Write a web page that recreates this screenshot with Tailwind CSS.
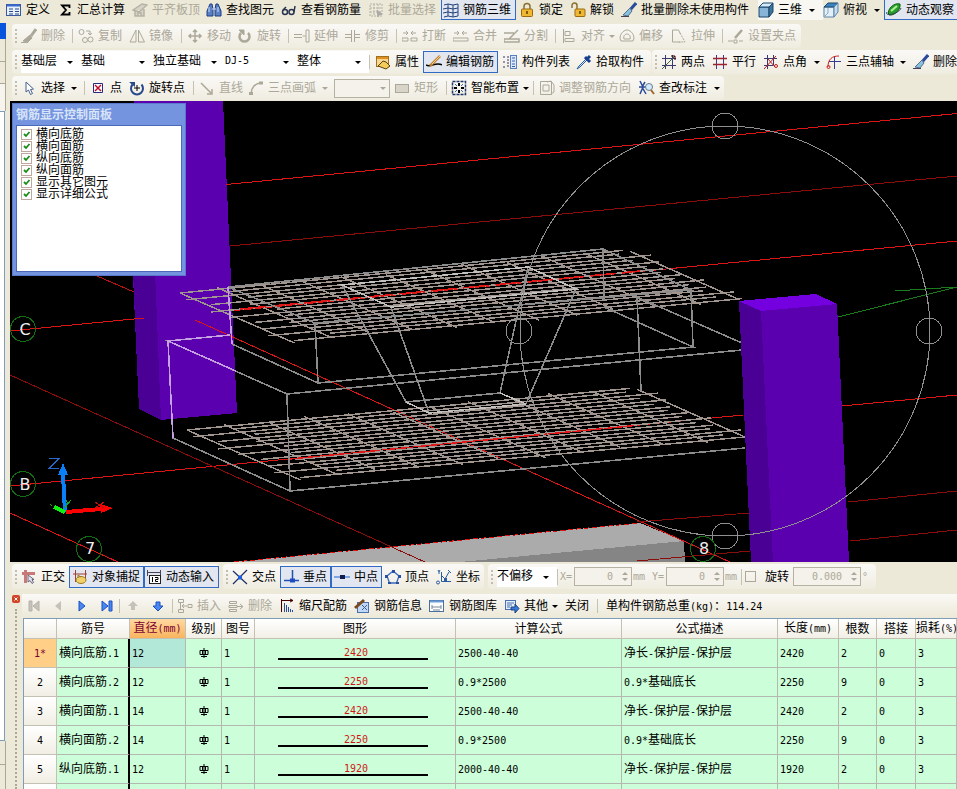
<!DOCTYPE html>
<html lang="zh-CN">
<head>
    <meta charset="UTF-8">
    <meta name="viewport" content="width=device-width, initial-scale=1.0">
    <title>钢筋三维</title>
    <script src="https://cdn.jsdelivr.net/npm/@tailwindcss/browser@4"></script>
</head>
<body class="flex h-screen flex-col overflow-hidden bg-[#ece9d8] fill-none stroke-current font-['Liberation_Sans','Noto_Sans_CJK_SC',sans-serif] text-xs leading-4 text-black whitespace-nowrap">

    <!-- icon set -->
    <svg class="hidden">
        <symbol id="i-define" viewBox="0 0 16 16"><rect x="0.5" y="2.5" width="14" height="11" fill="#e8f0fc" stroke="#3a5a9c"/><path d="M1 3.500h13" stroke="#3a6ad0" stroke-width="2"/><path d="M3 7h4M3 9.500h4M3 12h4M9 7h4M9 9.500h4M9 12h4" stroke="#2a4a8c"/></symbol>
        <symbol id="i-sum" viewBox="0 0 16 16"><path d="M12.500 6V3.500H5L9 8l-4 4.500h7.500V10" stroke="#000" stroke-width="1.800"/></symbol>
        <symbol id="i-slab" viewBox="0 0 16 16"><path d="M1 8l9-6 5 1-8 7zM3 9v5h9v-7M6 14v-3h3v3" stroke="#b5b2a4" fill="#d6d3c6" stroke-width="1.500"/></symbol>
        <symbol id="i-find" viewBox="0 0 16 16"><path d="M4 2h2l1 5v7H1V9zM10 2h2l3 7v5H9V7z" fill="#5a80c8" stroke="#1c3c80"/><path d="M6 7h4M3 5v5M12 5v5" stroke="#cfe0ff"/></symbol>
        <symbol id="i-glass" viewBox="0 0 16 16"><circle cx="4" cy="10" r="2.500" stroke="#2a3450" stroke-width="1.500"/><circle cx="10.500" cy="10" r="2.500" stroke="#2a3450" stroke-width="1.500"/><path d="M2 8l3-3M13 10l1-6" stroke="#2a3450" stroke-width="1.500"/></symbol>
        <symbol id="i-batch" viewBox="0 0 16 16"><path d="M2 2h12v12H2zM2 6h12M2 10h12M6 2v12M10 2v5" stroke="#b5b2a4" stroke-dasharray="2 1"/><path d="M9 8l5 4-3 1-1 2z" fill="#aaa" stroke="#aaa"/></symbol>
        <symbol id="i-grid3" viewBox="0 0 16 16"><path d="M1 3l4-1v12l-4 1M5 2l5 1v12l-5-1M10 3l5-1v12l-5 1M0 7l5-1 5 1 5-1M0 11l5-1 5 1 5-1" stroke="#22407c"/></symbol>
        <symbol id="i-lock" viewBox="0 0 16 16"><path d="M5 7V4.500a3 3 0 016 0V7" stroke="#8a7030" stroke-width="1.500"/><rect x="2.500" y="7" width="11" height="7.500" rx="1" fill="#f0b830" stroke="#9a6a10"/><path d="M8 9v3" stroke="#5a3a00" stroke-width="1.500"/></symbol>
        <symbol id="i-unlock" viewBox="0 0 16 16"><path d="M2 6V3.500a2.500 2.500 0 015 0V7" stroke="#8a7030" stroke-width="1.500"/><rect x="5" y="7" width="10" height="7.500" rx="1" fill="#f0b830" stroke="#9a6a10"/><path d="M10 9v3" stroke="#5a3a00" stroke-width="1.500"/></symbol>
        <symbol id="i-brush" viewBox="0 0 16 16"><path d="M15 1L9 8" stroke="#2a4a9c" stroke-width="3"/><path d="M9 6l2 3-4 5-5-1z" fill="#8ac0e0" stroke="#56708c"/><path d="M0 14.500h8" stroke="#445"/></symbol>
        <symbol id="i-cube" viewBox="0 0 16 16"><path d="M1 5v10h10V5z" fill="#88b4d8" stroke="#1c4468"/><path d="M1 5l4-4h10l-4 4z" fill="#d4ecfa" stroke="#1c4468"/><path d="M11 5l4-4v9l-4 5z" fill="#3c749c" stroke="#1c4468"/></symbol>
        <symbol id="i-topv" viewBox="0 0 16 16"><path d="M1 5v10h10V5z" fill="#e4f0f8" stroke="#5c84a8"/><path d="M1 5l4-4h10l-4 4z" fill="#3c84c0" stroke="#1c4468"/><path d="M11 5l4-4v9l-4 5z" fill="#c4dcec" stroke="#5c84a8"/><path d="M1 15l4-4V6" stroke="#8ab"/></symbol>
        <symbol id="i-orbit" viewBox="0 0 16 16"><path d="M3 13C0 8 8 0 14 2c1 5-5 12-11 11z" fill="#28a028" stroke="#106010"/><path d="M5 9l6-5" stroke="#b0f0a0" stroke-width="2"/><path d="M1 10c-3 5 12 2 14-4" stroke="#345"/></symbol>

        <symbol id="g-brush" viewBox="0 0 16 16"><path d="M15 1l-5 7" stroke-width="3"/><path d="M9 7l2 3-4 4-5-1zM0 14.500h7" fill="currentColor"/></symbol>
        <symbol id="g-copy" viewBox="0 0 16 16"><circle cx="3.500" cy="4" r="2.500"/><circle cx="7" cy="12" r="2.500"/><circle cx="12.500" cy="11.500" r="2.500"/><path d="M8 3h4v4M10 5l2 2 2-2"/></symbol>
        <symbol id="g-mirror" viewBox="0 0 16 16"><path d="M7 2v12H1zM9.500 2v12h6z"/></symbol>
        <symbol id="g-move" viewBox="0 0 16 16"><path d="M8 2v12M2 8h12M6 4l2-2 2 2M6 12l2 2 2-2M4 6L2 8l2 2M12 6l2 2-2 2" stroke-width="1.500"/></symbol>
        <symbol id="g-rot" viewBox="0 0 16 16"><path d="M4 5a5 5 0 107 0" stroke-width="2.500"/><path d="M2 2h5v5z" fill="currentColor"/></symbol>
        <symbol id="g-ext" viewBox="0 0 16 16"><path d="M0 6.500h8M0 9.500h8M8.500 8h3M12 2h3v12h-3z"/></symbol>
        <symbol id="g-trim" viewBox="0 0 16 16"><path d="M0 6.500h6M0 9.500h6M10 6.500h5M10 9.500h5M6.500 2v12M9.500 2v12"/></symbol>
        <symbol id="g-break" viewBox="0 0 16 16"><path d="M0 10h6v3H0zM9 10h6v3H9zM1 5h5M9 5h5M4 3l2 2-2 2M11 3L9 5l2 2"/></symbol>
        <symbol id="g-join" viewBox="0 0 16 16"><path d="M0 10h15v3H0zM1 5h5M9 5h5M4 3l2 2-2 2M11 3L9 5l2 2"/></symbol>
        <symbol id="g-split" viewBox="0 0 16 16"><path d="M0 5h10M0 11h15v3H0zM14 2l-9 9" stroke-width="1.500"/></symbol>
        <symbol id="g-align" viewBox="0 0 16 16"><path d="M2.500 1v14M4 3.500h5v4H4zM4 10.500h9v3H4z"/></symbol>
        <symbol id="g-off" viewBox="0 0 16 16"><path d="M2 13c-3-5 2-11 6-11s9 6 6 11z"/><path d="M5 11c-1-3 1-5 3-5s4 2 3 5z"/></symbol>
        <symbol id="g-str" viewBox="0 0 16 16"><path d="M1.500 2v12h8M1.500 2h6l2 4"/><path d="M9 5l5 9H8" stroke-dasharray="2 1"/></symbol>
        <symbol id="g-grip" viewBox="0 0 16 16"><path d="M14 2l-7 8" stroke-width="2.500"/><path d="M0 13h5M6 12h3v3H6zM11 13h4"/></symbol>

        <symbol id="i-prop" viewBox="0 0 16 16"><rect x="1.500" y="2.500" width="12" height="10" fill="#f8d890" stroke="#a07020"/><path d="M2 4h11" stroke="#e09020" stroke-width="2"/><path d="M3 12l5-5 3 1 4 4-4 3z" fill="#f4cc58" stroke="#5a4010"/></symbol>
        <symbol id="i-edit" viewBox="0 0 16 16"><path d="M0 11c5 3 10-4 16 0" stroke="#000" stroke-width="1.500"/><path d="M14 2L6 10l-2 2" stroke="#c08030" stroke-width="2.500"/><path d="M14 2L6 10" stroke="#f4d080"/></symbol>
        <symbol id="i-list" viewBox="0 0 16 16"><path d="M1 3h3M1 8h3M1 13h3M6 2v12" stroke="#336" stroke-dasharray="2 1"/><rect x="8.500" y="1.500" width="6" height="13" fill="#dce8fa" stroke="#5a80c0"/><path d="M10 4h3M10 7h3M10 10h3M10 12.500h3" stroke="#36a"/></symbol>
        <symbol id="i-pick" viewBox="0 0 16 16"><path d="M10 5l-7 7-2 3 3-2 7-7" fill="#d4e8ff" stroke="#2a5a9c"/><path d="M9 3l5 5M11 5l3-3" stroke="#1a3f90" stroke-width="3"/></symbol>
        <symbol id="i-two" viewBox="0 0 16 16"><path d="M4.500 1v14M11.500 1v14M1 4.500h14M1 11.500h14" stroke="#3a3a70"/><path d="M1 15L14 2" stroke="#3a6a3a"/><path d="M10 2h4v4" stroke="#400"/></symbol>
        <symbol id="i-par" viewBox="0 0 16 16"><path d="M4.500 1v14M11.500 1v14" stroke="#3a3a90"/><path d="M1 4.500h14M1 10.500h14" stroke="#a02030" stroke-width="1.500"/></symbol>
        <symbol id="i-ang" viewBox="0 0 16 16"><path d="M4.500 1v14M10.500 1v10M1 4.500h13M1 11.500h9" stroke="#3a3a70"/><path d="M1 15L13 2M5 5l7 8" stroke="#c02020"/><circle cx="13" cy="12" r="1.500" stroke="#c02020"/></symbol>
        <symbol id="i-arc3" viewBox="0 0 16 16"><path d="M8.500 2v13M3 7.500h12" stroke="#3a3a90"/><path d="M2 13C2 5 6 2 13 2" stroke="#d02020"/><circle cx="2.500" cy="13" r="1.500" stroke="#d02020"/></symbol>

        <symbol id="i-arrow" viewBox="0 0 16 16"><path d="M5 2v10l2.500-2 2 4.500 2-1-2-4 3-.500z" fill="#fff" stroke="#44608c"/></symbol>
        <symbol id="i-pt" viewBox="0 0 16 16"><path d="M3.500 3.500h9v9h-9z" fill="#fff" stroke="#2a2a80"/><path d="M5 5l6 6M11 5l-6 6" stroke="#c01030" stroke-width="1.500"/></symbol>
        <symbol id="i-rotp" viewBox="0 0 16 16"><path d="M3.500 4.500a6 6 0 109 0" stroke="#26488c" stroke-width="2"/><path d="M0 2h6v5z" fill="#26488c" stroke="none"/><path d="M8 5v6M5 8h6" stroke="#000"/></symbol>
        <symbol id="g-line" viewBox="0 0 16 16"><path d="M2 3l10 10M13 9v5H8" stroke-width="1.500"/></symbol>
        <symbol id="g-arc" viewBox="0 0 16 16"><path d="M3 14C3 8 7 3 13 3" stroke-width="1.500"/><path d="M1 12h4v3H1zM11 1.500h4v3h-4z" fill="currentColor" stroke="none"/></symbol>
        <symbol id="g-rect" viewBox="0 0 16 16"><rect x="1.500" y="4.500" width="13" height="8" fill="#d8d5c8"/></symbol>
        <symbol id="i-smart" viewBox="0 0 16 16"><rect x="1.500" y="1.500" width="13" height="13" stroke="#22386c" stroke-dasharray="3 1" stroke-width="1.500"/><path d="M8 3v3M8 10v3M3 8h3M10 8h3" stroke="#000" stroke-width="2"/><path d="M4 4l2 2M12 4l-2 2M4 12l2-2M12 12l-2-2" stroke="#36a"/></symbol>
        <symbol id="g-dir" viewBox="0 0 16 16"><path d="M1.500 1.500h11v13h-11zM4 5h6v6H4zM8 2l4-1 3 4v7l-3 2"/></symbol>
        <symbol id="i-check" viewBox="0 0 16 16"><path d="M1 1l3 6-3 7M6 2L3 7l4 7M0 7h8" stroke="#2a4a9c" stroke-width="1.500"/><circle cx="10" cy="7" r="3.500" fill="#d4ecff" stroke="#6a7a8c"/><path d="M12 10l3 4" stroke="#a06a30" stroke-width="2"/></symbol>

        <symbol id="i-ortho" viewBox="0 0 16 16"><path d="M4.500 1v13M1 4.500h13" stroke="#c87878" stroke-width="3"/><path d="M7 6v7l2-1.500 2 3 1.500-1-1.500-3h2z" fill="#e4e4f4" stroke="#667"/></symbol>
        <symbol id="i-snap" viewBox="0 0 16 16"><path d="M1 5h14M3.500 1v12M13.500 1v9" stroke="#a04030"/><ellipse cx="9" cy="11" rx="5" ry="3.500" fill="#f0d068" stroke="#a07a20"/><path d="M6 9V6l3 2" stroke="#a07a20"/></symbol>
        <symbol id="i-dyn" viewBox="0 0 16 16"><path d="M1.500 1v6M14.500 1v6M2 3.500h12" stroke="#445"/><rect x="3.500" y="6.500" width="11" height="8" fill="#fff" stroke="#222"/><path d="M6.500 8v5M9 8.500h3v2H9.500v2H12" stroke="#000"/></symbol>
        <symbol id="i-cross" viewBox="0 0 16 16"><path d="M1 2l14 13M15 1L1 15" stroke="#1c3060" stroke-width="1.200"/><rect x="6" y="6.500" width="4" height="4" fill="#2060e0" stroke="none"/></symbol>
        <symbol id="i-perp" viewBox="0 0 16 16"><path d="M9.500 1v10M1 11.500h15" stroke="#2050b0" stroke-width="1.500"/><path d="M7 9.500h5v4H7z" fill="#1c4cc0" stroke="none"/></symbol>
        <symbol id="i-mid" viewBox="0 0 16 16"><path d="M0 8h16" stroke="#5a90e0" stroke-width="1.500"/><rect x="6" y="6" width="5" height="4" fill="#101c50" stroke="none"/></symbol>
        <symbol id="i-penta" viewBox="0 0 16 16"><path d="M8 2l6 5-2.500 7h-7L2 7z" stroke="#3a6ac0" stroke-width="1.300"/><path d="M7 1h3v3H7zM0 6h3v3H0zM13 6h3v3h-3zM3 13h3v2H3zM11 13h3v2h-3z" fill="#28509c" stroke="none"/></symbol>
        <symbol id="i-coord" viewBox="0 0 16 16"><path d="M5.500 3v9.500H15M5 6l4 4 4-7M2 1l1 2 1-2M3 3v2M12 1l3 3" stroke="#2a5aa0"/><circle cx="2" cy="13.500" r="1.500" stroke="#2a5aa0"/><path d="M8 9h3v3H8z" fill="#2a5aa0" stroke="none"/></symbol>

        <symbol id="g-ins" viewBox="0 0 16 16"><path d="M1.500 1.500h5v3h-5zM1.500 11.500h5v3h-5zM11 6.500h4v3h-4zM3.500 5v6M10 8H5M7 6L5 8l2 2"/></symbol>
        <symbol id="g-del" viewBox="0 0 16 16"><path d="M1.500 3.500h7v2h-7zM1.500 11.500h7v2h-7zM1 7.500h8v2H1zM9 8.500h6M12 6l3 2.500-3 2.500"/></symbol>
        <symbol id="i-scale" viewBox="0 0 16 16"><path d="M2.500 1v13M2 2.500h12M11 1l3 1.500L11 4" stroke="#400"/><path d="M5.500 5v9M7.500 7v7M9.500 9v5M11.500 11v3M13.500 12v2" stroke="#2a4a9c"/></symbol>
        <symbol id="i-info" viewBox="0 0 16 16"><rect x="3.500" y="4.500" width="11" height="10" fill="#c0d8f4" stroke="#4a70b0"/><path d="M1 10L10 2" stroke="#7a4a20" stroke-width="3"/><path d="M8 7l5 5M13 7l-5 5" stroke="#3a60a0"/></symbol>
        <symbol id="i-lib" viewBox="0 0 16 16"><rect x="0.500" y="2.500" width="14" height="11" fill="#fff" stroke="#4a70a0"/><path d="M1 3.500h13" stroke="#6a9ad8" stroke-width="2"/><path d="M3 9h9M3 7v4M12 7v4M4 12h7" stroke="#789"/></symbol>
        <symbol id="i-other" viewBox="0 0 16 16"><rect x="1.500" y="2.500" width="10" height="9" fill="#e4eefc" stroke="#4a70b0"/><path d="M3 5h7M3 7h5M3 9h3" stroke="#4a70b0"/><path d="M7 9h4V6l4 4.500L11 15v-3H7z" fill="#3a78d8" stroke="#1c4080"/></symbol>
        <symbol id="n-play" viewBox="0 0 16 16"><path d="M5 3l6 5-6 5z"/></symbol>
        <symbol id="n-end" viewBox="0 0 16 16"><path d="M3 3l6 5-6 5zM10 3h3v10h-3z"/></symbol>
        <symbol id="n-down" viewBox="0 0 16 16"><path d="M6 4h4v4h3l-5 5-5-5h3z"/></symbol>
        <symbol id="s-phi" viewBox="0 0 10 10"><path d="M1 2.500h8v4H1zM3.500 2.500v4M6.500 2.500v4M5 0v10M2 8.500h6" stroke="#000"/></symbol>
    </svg>

    <!-- top toolbar -->
    <nav class="flex h-[23px] shrink-0 items-start overflow-hidden pl-[6px] *:shrink-0 [&>button]:flex [&>button]:h-[20px] [&>button]:items-center [&>button]:gap-1 [&_svg]:size-4 [&_svg]:shrink-0">
        <button class="w-[51px]"><svg><use href="#i-define"/></svg>定义</button>
        <button class="w-[75px]"><svg><use href="#i-sum"/></svg>汇总计算</button>
        <button class="w-[74px] text-[#aca899]" disabled><svg><use href="#i-slab"/></svg>平齐板顶</button>
        <button class="w-[75px]"><svg><use href="#i-find"/></svg>查找图元</button>
        <button class="w-[87px]"><svg><use href="#i-glass"/></svg>查看钢筋量</button>
        <button class="w-[73px] text-[#aca899]" disabled><svg><use href="#i-batch"/></svg>批量选择</button>
        <button class="mr-[3px] w-[75px] border border-t-0 border-[#316ac5] bg-[#e1e6f0] pl-px"><svg><use href="#i-grid3"/></svg>钢筋三维</button>
        <button class="w-[51px]"><svg><use href="#i-lock"/></svg>锁定</button>
        <button class="w-[51px]"><svg><use href="#i-unlock"/></svg>解锁</button>
        <button class="w-[137px]"><svg><use href="#i-brush"/></svg>批量删除未使用构件</button>
        <button class="w-[65px] bg-[#f8f7f2]"><svg><use href="#i-cube"/></svg>三维<b class="ml-[3px] border-x-[3px] border-t-[3px] border-x-transparent"></b></button>
        <button class="w-[61px]"><svg><use href="#i-topv"/></svg>俯视<b class="ml-[3px] border-x-[3px] border-t-[3px] border-x-transparent"></b></button>
        <button class="w-[84px] border border-t-0 border-[#316ac5] bg-[#e1e6f0] pl-px"><svg><use href="#i-orbit"/></svg>动态观察</button>
    </nav>

    <div class="flex min-h-0 flex-1">
        <!-- edge of the docked panel -->
        <aside class="flex w-[10px] shrink-0 flex-col pr-[4px]">
            <div class="h-[16px] bg-[#0855dd]"></div>
            <div class="h-[23px] border-r border-b border-[#aca899]"></div>
            <div class="h-[22px] border-r border-b border-[#aca899]"></div>
            <div class="h-[27px] border-r border-[#aca899] bg-[#f6f4ec]"></div>
            <div class="mr-px h-[630px] border-r border-y border-[#7f9db9] bg-white"></div>
            <div class="h-[24px] border-r border-b border-[#aca899]"></div>
            <div class="flex-1 border-r border-[#aca899]"></div>
        </aside>

        <main class="flex min-w-0 flex-1 flex-col">
            <!-- editing tools -->
            <div class="flex shrink-0 flex-col gap-[2px] overflow-hidden py-px">
                <div class="ml-[2px] flex h-[24px] w-fit items-center rounded-sm bg-linear-to-b from-[#faf9f6] to-[#efece0] text-[#aca899] *:shrink-0 [&>button]:flex [&>button]:h-[22px] [&>button]:items-center [&>button]:gap-1 [&_svg]:size-4 [&_svg]:shrink-0">
                    <div class="mr-[2px] ml-[3px] h-[14px] w-[4px] border-l-2 border-dotted border-[#c1beae]"></div>
                    <button disabled class="w-[51px]"><svg><use href="#g-brush"/></svg>删除</button>
                    <div class="h-[14px] w-[6px] border-l border-[#c5c2b2]"></div>
                    <button disabled class="w-[51px]"><svg><use href="#g-copy"/></svg>复制</button>
                    <button disabled class="w-[52px]"><svg><use href="#g-mirror"/></svg>镜像</button>
                    <div class="h-[14px] w-[6px] border-l border-[#c5c2b2]"></div>
                    <button disabled class="w-[50px]"><svg><use href="#g-move"/></svg>移动</button>
                    <button disabled class="w-[51px]"><svg><use href="#g-rot"/></svg>旋转</button>
                    <div class="h-[14px] w-[6px] border-l border-[#c5c2b2]"></div>
                    <button disabled class="w-[51px]"><svg><use href="#g-ext"/></svg>延伸</button>
                    <button disabled class="w-[51px]"><svg><use href="#g-trim"/></svg>修剪</button>
                    <div class="h-[14px] w-[6px] border-l border-[#c5c2b2]"></div>
                    <button disabled class="w-[51px]"><svg><use href="#g-break"/></svg>打断</button>
                    <button disabled class="w-[51px]"><svg><use href="#g-join"/></svg>合并</button>
                    <button disabled class="w-[51px]"><svg><use href="#g-split"/></svg>分割</button>
                    <div class="h-[14px] w-[6px] border-l border-[#c5c2b2]"></div>
                    <button disabled class="w-[58px]"><svg><use href="#g-align"/></svg>对齐<b class="border-x-[3px] border-t-[3px] border-x-transparent"></b></button>
                    <button disabled class="w-[52px]"><svg><use href="#g-off"/></svg>偏移</button>
                    <button disabled class="w-[51px]"><svg><use href="#g-str"/></svg>拉伸</button>
                    <div class="h-[14px] w-[6px] border-l border-[#c5c2b2]"></div>
                    <button disabled class="w-[73px]"><svg><use href="#g-grip"/></svg>设置夹点</button>
                </div>

                <div class="flex h-[24px] *:shrink-0">
                    <div class="ml-[2px] flex w-[639px] items-center rounded-sm bg-linear-to-b from-[#faf9f6] to-[#efece0] *:shrink-0 [&>button]:flex [&>button]:h-[22px] [&>button]:items-center [&>button]:gap-1 [&>button>svg]:size-4 [&>button>svg]:shrink-0 [&>label]:relative [&>label]:h-[22px] [&>label]:bg-white [&_select]:h-[20px] [&_select]:w-full [&_select]:appearance-none [&_b]:absolute [&_b]:top-[10px] [&_b]:right-[8px] [&_b]:border-x-[3px] [&_b]:border-t-[3px] [&_b]:border-x-transparent">
                        <div class="mr-[2px] ml-[3px] h-[14px] w-[4px] border-l-2 border-dotted border-[#c1beae]"></div>
                        <label class="w-[60px]"><select aria-label="楼层"><option>基础层</option></select><b></b></label>
                        <label class="w-[72px]"><select aria-label="构件类型"><option>基础</option></select><b></b></label>
                        <label class="w-[72px]"><select aria-label="构件"><option>独立基础</option></select><b></b></label>
                        <label class="w-[72px]"><select aria-label="名称" class="font-['DejaVu_Sans_Mono',monospace] text-[10px]"><option>DJ-5</option></select><b></b></label>
                        <label class="w-[72px]"><select aria-label="范围"><option>整体</option></select><b></b></label>
                        <div class="h-[14px] w-[6px] border-l border-[#c5c2b2]"></div>
                        <button class="w-[48px]"><svg><use href="#i-prop"/></svg>属性</button>
                        <button class="mr-[4px] w-[75px] border border-[#316ac5] bg-[#e1e6f0] pl-[2px]"><svg><use href="#i-edit"/></svg>编辑钢筋</button>
                        <button class="w-[74px]"><svg><use href="#i-list"/></svg>构件列表</button>
                        <button class="w-[72px]"><svg><use href="#i-pick"/></svg>拾取构件</button>
                    </div>
                    <div class="ml-px flex items-center rounded-sm bg-linear-to-b from-[#faf9f6] to-[#efece0] *:shrink-0 [&>button]:flex [&>button]:h-[22px] [&>button]:items-center [&>button]:gap-1 [&_svg]:size-4 [&_svg]:shrink-0">
                        <div class="mr-[2px] ml-[3px] h-[14px] w-[4px] border-l-2 border-dotted border-[#c1beae]"></div>
                        <button class="w-[51px]"><svg><use href="#i-two"/></svg>两点</button>
                        <button class="w-[51px]"><svg><use href="#i-par"/></svg>平行</button>
                        <button class="w-[63px]"><svg><use href="#i-ang"/></svg>点角<b class="ml-[3px] border-x-[3px] border-t-[3px] border-x-transparent"></b></button>
                        <button class="w-[87px]"><svg><use href="#i-arc3"/></svg>三点辅轴<b class="ml-[2px] border-x-[3px] border-t-[3px] border-x-transparent"></b></button>
                        <button class="w-[51px]"><svg><use href="#i-brush"/></svg>删除</button>
                    </div>
                </div>

                <div class="ml-[2px] flex h-[24px] w-fit items-center rounded-sm bg-linear-to-b from-[#faf9f6] to-[#efece0] *:shrink-0 [&>button]:flex [&>button]:h-[22px] [&>button]:items-center [&>button]:gap-1 [&_svg]:size-4 [&_svg]:shrink-0">
                    <div class="mr-[2px] ml-[3px] h-[14px] w-[4px] border-l-2 border-dotted border-[#c1beae]"></div>
                    <button class="w-[63px]"><svg><use href="#i-arrow"/></svg>选择<b class="ml-[2px] border-x-[3px] border-t-[3px] border-x-transparent"></b></button>
                    <div class="h-[14px] w-[6px] border-l border-[#c5c2b2]"></div>
                    <button class="w-[39px]"><svg><use href="#i-pt"/></svg>点</button>
                    <button class="w-[64px]"><svg><use href="#i-rotp"/></svg>旋转点</button>
                    <div class="h-[14px] w-[6px] border-l border-[#c5c2b2]"></div>
                    <button disabled class="w-[49px] text-[#aca899]"><svg><use href="#g-line"/></svg>直线</button>
                    <button disabled class="w-[86px] text-[#aca899]"><svg><use href="#g-arc"/></svg>三点画弧<b class="ml-[2px] border-x-[3px] border-t-[3px] border-x-transparent"></b></button>
                    <label class="relative mr-[4px] h-[19px] w-[56px]"><select disabled aria-label="画弧参数" class="h-[19px] w-full appearance-none border border-[#b5b2a2] bg-[#f4f2ea]"><option></option></select><b class="absolute top-[8px] right-[4px] border-x-[3px] border-t-[3px] border-x-transparent text-[#aca899]"></b></label>
                    <button disabled class="w-[52px] text-[#aca899]"><svg><use href="#g-rect"/></svg>矩形</button>
                    <div class="h-[14px] w-[5px] border-l border-[#c5c2b2]"></div>
                    <button class="w-[82px]"><svg><use href="#i-smart"/></svg>智能布置<b class="border-x-[3px] border-t-[3px] border-x-transparent"></b></button>
                    <div class="h-[14px] w-[6px] border-l border-[#c5c2b2]"></div>
                    <button disabled class="w-[100px] text-[#aca899]"><svg><use href="#g-dir"/></svg>调整钢筋方向</button>
                    <button class="w-[85px]"><svg><use href="#i-check"/></svg>查改标注<b class="ml-[3px] border-x-[3px] border-t-[3px] border-x-transparent"></b></button>
                </div>
            </div>

            <!-- 3D viewport -->
            <section class="relative h-[461px] shrink-0 overflow-hidden bg-black">
                <svg class="h-full w-full" viewBox="10 101 947 461" preserveAspectRatio="xMinYMin slice" fill="none" stroke="none" shape-rendering="crispEdges">
                    <path d="M234 562L640 523L684 541L685 562z" fill="#ababab"/>
                    <path d="M460 562L684 541L685 562z" fill="#858585"/>
                    <path d="M134 101L223 101L237 413L161 420L139 409L133 277z" fill="#5b00ae"/>
                    <path d="M133 270L155 270L161 420L139 409z" fill="#4a0094"/>
                    <g stroke="#dc1414">
                        <path d="M226 184.500L957 113.500M10 331L144 318M230 311L957 241M10 486L743 415M842 406L957 395M10 513L118 562M195 320L730 562"/>
                        <path d="M97 276L134 292" stroke="#c01010"/>
                        <path d="M234 562L640 523" stroke-dasharray="5 3"/>
                    </g>
                    <path d="M230 246L957 176M10 375L425 562M637 522L749 513M848 502L957 491M850 541L957 530M637 561L750 551" stroke="#8c0c0c"/>
                    <g id="mesh" stroke="#a0958f" stroke-width="1.500"></g>
                    <path d="M240 309L640 271M290 459L640 425" stroke="#e01818" stroke-width="1.500" stroke-dasharray="26 6"/>
                    <g stroke="#8c8c8c" stroke-width="1.600">
                        <path d="M230 335L168 341L287 394L742 350M287 394L290 491L745 448M168 341L173 438L290 491M637 297L742 343M637 297L641 391"/>
                        <path d="M228 287L603 249L691 290L315 323zM232 344L318 383L693 347L604 307M228 287L232 344M603 249L604 300M315 323L318 383M691 290L693 347"/>
                        <path d="M342 285L406 402L500 393L528 267M391 307L429 413M576 289L526 404"/>
                    </g>
                    <path d="M391 307L342 285L528 267L576 289zM406 402L429 413L526 404L500 393" stroke="#c4c0be" stroke-width="1.500"/>
                    <path d="M230 335L168 341L173 438M168 341L236 371M228 287L232 344" stroke="#c8a0e8" stroke-width="1.500"/>
                    <path d="M739 301L761 311L773 562L751 562z" fill="#4a0094"/>
                    <path d="M761 311L837 304L849 562L773 562z" fill="#5b00ae"/>
                    <path d="M739 301L816 294L837 304L761 311z" fill="#7400e0"/>
                    <path d="M838 317L957 287M895 291L957 287" stroke="#1a7c1a"/>
                    <g stroke="#909090">
                        <circle cx="725" cy="331" r="205"/>
                        <circle cx="725" cy="126" r="13"/>
                        <circle cx="725" cy="536" r="13"/>
                        <circle cx="519" cy="331" r="13"/>
                        <circle cx="929" cy="331" r="13"/>
                    </g>
                    <g stroke="#127012">
                        <circle cx="23" cy="329" r="12.500"/>
                        <circle cx="23" cy="484" r="12.500"/>
                        <circle cx="89" cy="549" r="12.500"/>
                        <circle cx="703" cy="549" r="12.500"/>
                    </g>
                    <g fill="#eee" font-family="DejaVu Sans" font-size="16" text-anchor="middle">
                        <text x="25" y="335">C</text>
                        <text x="25" y="490">B</text>
                        <text x="90" y="554">7</text>
                        <text x="704" y="554">8</text>
                    </g>
                    <path d="M65 512L63 474" stroke="#0a80f8" stroke-width="4"/>
                    <path d="M58 475L63 463L68 475z" fill="#0a80f8"/>
                    <path d="M66 512L101 509" stroke="#f00" stroke-width="4"/>
                    <path d="M100 504L113 508L101 513z" fill="#f00"/>
                    <path d="M65 512L54 507" stroke="#10f010" stroke-width="4"/>
                    <path d="M66 500L68 504L71 500M68 504L65 508M50 504L52 506" stroke="#10b010"/>
                    <path d="M95 502L104 508M104 502L95 508" stroke="#c01010"/>
                    <path d="M49 458.500H59L49 468.500H59" stroke="#2868c8"/>
                </svg>

                <!-- floating display panel -->
                <div class="absolute top-[2px] left-[2px] flex h-[173px] w-[174px] flex-col border border-[#5c78cc] bg-[#7594e0] px-[3px] pb-[3px]">
                    <h2 class="h-[21px] leading-[23px] font-bold text-[#d8e4f8]">钢筋显示控制面板</h2>
                    <div class="flex-1 border border-[#4c68b8] bg-white pt-[2px] pl-[4px] leading-3 [&>label]:flex [&>label]:h-[12px] [&>label]:items-center [&>label]:gap-[4px] [&_input]:col-start-1 [&_input]:row-start-1 [&_input]:size-[11px] [&_input]:appearance-none [&_input]:border [&_input]:border-[#bfa8a0] [&_input]:bg-white [&_span]:grid [&_svg]:col-start-1 [&_svg]:row-start-1 [&_svg]:size-[11px]">
                        <label><span><input type="checkbox" checked><svg viewBox="0 0 11 11"><path d="M3 5l2 2 3.500-4" stroke="#1c8c1c" stroke-width="1.800"/></svg></span>横向底筋</label>
                        <label><span><input type="checkbox" checked><svg viewBox="0 0 11 11"><path d="M3 5l2 2 3.500-4" stroke="#1c8c1c" stroke-width="1.800"/></svg></span>横向面筋</label>
                        <label><span><input type="checkbox" checked><svg viewBox="0 0 11 11"><path d="M3 5l2 2 3.500-4" stroke="#1c8c1c" stroke-width="1.800"/></svg></span>纵向底筋</label>
                        <label><span><input type="checkbox" checked><svg viewBox="0 0 11 11"><path d="M3 5l2 2 3.500-4" stroke="#1c8c1c" stroke-width="1.800"/></svg></span>纵向面筋</label>
                        <label><span><input type="checkbox" checked><svg viewBox="0 0 11 11"><path d="M3 5l2 2 3.500-4" stroke="#1c8c1c" stroke-width="1.800"/></svg></span>显示其它图元</label>
                        <label><span><input type="checkbox" checked><svg viewBox="0 0 11 11"><path d="M3 5l2 2 3.500-4" stroke="#1c8c1c" stroke-width="1.800"/></svg></span>显示详细公式</label>
                    </div>
                </div>
            </section>

            <!-- snapping bar -->
            <div class="flex h-[32px] shrink-0 items-start gap-[4px] overflow-hidden pt-[2px] pl-[2px] *:flex *:h-[25px] *:shrink-0 *:items-center *:rounded-sm *:bg-linear-to-b *:from-[#faf9f6] *:to-[#efece0] [&_button]:flex [&_button]:h-[22px] [&_button]:items-center [&_button]:gap-1 [&_svg]:size-4 [&_svg]:shrink-0">
                <div>
                    <div class="mr-[2px] ml-[3px] h-[14px] w-[4px] border-l-2 border-dotted border-[#c1beae]"></div>
                    <button class="w-[48px]"><svg><use href="#i-ortho"/></svg>正交</button>
                    <button class="w-[75px] border border-[#316ac5] bg-[#e1e6f0] pl-[2px]"><svg><use href="#i-snap"/></svg>对象捕捉</button>
                    <button class="w-[75px] border border-[#316ac5] bg-[#e1e6f0] pl-px"><svg><use href="#i-dyn"/></svg>动态输入</button>
                </div>
                <div>
                    <div class="mr-[2px] ml-[3px] h-[14px] w-[4px] border-l-2 border-dotted border-[#c1beae]"></div>
                    <button class="w-[48px]"><svg><use href="#i-cross"/></svg>交点</button>
                    <button class="w-[51px] border border-[#316ac5] bg-[#e1e6f0] pl-[2px]"><svg><use href="#i-perp"/></svg>垂点</button>
                    <button class="mr-[3px] w-[51px] border border-[#316ac5] bg-[#e1e6f0] pl-[2px]"><svg><use href="#i-mid"/></svg>中点</button>
                    <button class="w-[51px]"><svg><use href="#i-penta"/></svg>顶点</button>
                    <button class="w-[48px]"><svg><use href="#i-coord"/></svg>坐标</button>
                </div>
                <div class="font-['DejaVu_Sans_Mono','Noto_Sans_CJK_SC',monospace] text-[10px] text-[#aca899] [&_input[type=text]]:h-[19px] [&_input[type=text]]:border [&_input[type=text]]:border-[#b5b2a2] [&_input[type=text]]:bg-[#f4f2ea] [&_input[type=text]]:pr-[18px] [&_input[type=text]]:text-right [&_i]:absolute [&_i]:right-[4px] [&_i]:border-x-[3px] [&_i]:border-x-transparent">
                    <div class="mr-[2px] ml-[3px] h-[14px] w-[4px] border-l-2 border-dotted border-[#c1beae]"></div>
                    <label class="relative h-[20px] w-[60px] bg-white text-black"><select aria-label="偏移方式" class="h-[18px] w-full appearance-none text-xs"><option>不偏移</option></select><b class="absolute top-[9px] right-[8px] border-x-[3px] border-t-[3px] border-x-transparent"></b></label>
                    <label for="dx" class="w-[17px] border-l border-[#c5c2b2] pl-[2px]">X=</label>
                    <span class="relative mr-px"><input id="dx" type="text" value="0" disabled class="w-[58px]"><i class="top-[5px] border-b-[3px]"></i><i class="bottom-[5px] border-t-[3px]"></i></span>
                    <span class="w-[19px]">mm</span>
                    <label for="dy" class="w-[14px]">Y=</label>
                    <span class="relative mr-px"><input id="dy" type="text" value="0" disabled class="w-[58px]"><i class="top-[5px] border-b-[3px]"></i><i class="bottom-[5px] border-t-[3px]"></i></span>
                    <span class="w-[17px] border-r border-[#c5c2b2]">mm</span>
                    <input id="rot" type="checkbox" class="mr-[9px] ml-[3px] size-[11px] appearance-none border border-[#aca899]">
                    <label for="rot" class="w-[28px] text-xs text-black">旋转</label>
                    <span class="relative mr-px"><input type="text" value="0.000" aria-label="旋转角度" disabled class="w-[68px]"><i class="top-[5px] border-b-[3px]"></i><i class="bottom-[5px] border-t-[3px]"></i></span>
                    <span class="w-[14px]">°</span>
                </div>
            </div>

            <!-- rebar list -->
            <section class="flex min-h-0 flex-1">
                <div class="flex w-[12px] shrink-0 flex-col items-center">
                    <button aria-label="关闭面板" class="mt-px h-[8px] w-[8px] rounded-[2px] bg-[#d04428]"><svg viewBox="0 0 8 8"><path d="M2.500 2.500l3 3M5.500 2.500l-3 3" stroke="#fff"/></svg></button>
                    <div class="mt-[6px] w-0 flex-1 border-l-2 border-dotted border-[#aca899]"></div>
                </div>
                <div class="flex min-w-0 flex-1 flex-col overflow-hidden">
                    <div class="flex h-[24px] shrink-0 items-center bg-linear-to-b from-[#faf9f6] to-[#ece9d8] *:shrink-0 [&>button]:flex [&>button]:h-[22px] [&>button]:items-center [&>button]:gap-1 [&_svg]:size-4 [&_svg]:shrink-0">
                        <button disabled aria-label="第一条" class="w-[24px] justify-center"><svg class="-scale-x-100" fill="#c4c2ba" stroke="#b4b2aa"><use href="#n-end"/></svg></button>
                        <button disabled aria-label="上一条" class="w-[24px] justify-center"><svg class="-scale-x-100" fill="#c4c2ba" stroke="none"><use href="#n-play"/></svg></button>
                        <button aria-label="下一条" class="w-[24px] justify-center"><svg fill="#4a88f0" stroke="#1c50c0"><use href="#n-play"/></svg></button>
                        <button aria-label="最后一条" class="w-[25px] justify-center"><svg fill="#4a88f0" stroke="#1c50c0"><use href="#n-end"/></svg></button>
                        <div class="h-[14px] w-[2px] border-l border-[#c5c2b2]"></div>
                        <button disabled aria-label="上移" class="w-[23px] justify-center"><svg class="-scale-y-100" fill="#c4c2ba" stroke="none"><use href="#n-down"/></svg></button>
                        <button aria-label="下移" class="w-[28px] justify-center"><svg fill="#4a88f0" stroke="#1c50c0"><use href="#n-down"/></svg></button>
                        <div class="h-[14px] w-[5px] border-l border-[#c5c2b2]"></div>
                        <button disabled class="w-[51px] text-[#aca899]"><svg><use href="#g-ins"/></svg>插入</button>
                        <button disabled class="w-[51px] text-[#aca899]"><svg><use href="#g-del"/></svg>删除</button>
                        <button class="w-[75px]"><svg><use href="#i-scale"/></svg>缩尺配筋</button>
                        <button class="w-[75px]"><svg><use href="#i-info"/></svg>钢筋信息</button>
                        <button class="w-[75px]"><svg><use href="#i-lib"/></svg>钢筋图库</button>
                        <button class="w-[61px]"><svg><use href="#i-other"/></svg>其他<b class="border-x-[3px] border-t-[3px] border-x-transparent"></b></button>
                        <button class="w-[32px]">关闭</button>
                        <div class="h-[14px] w-[9px] border-l border-[#c5c2b2]"></div>
                        <p>单构件钢筋总重<span class="font-['DejaVu_Sans_Mono',monospace] text-[10px]">(kg)</span>：<span class="font-['DejaVu_Sans_Mono',monospace] text-[10px]">114.24</span></p>
                    </div>

                    <table class="ml-px w-[934px] shrink-0 table-fixed border-separate border-spacing-0 border-t border-l border-[#7f9db9] bg-[#ccffd9] text-left [&_em]:font-['DejaVu_Sans_Mono',monospace] [&_em]:text-[10px] [&_em]:not-italic [&_td]:h-[29px] [&_td]:overflow-hidden [&_td]:border-r [&_td]:border-b [&_td]:border-[#b4b8b0] [&_td]:p-0 [&_td]:pl-[2px] [&_th]:border-r [&_th]:border-b [&_th]:border-[#c4c1b4] [&_th]:p-0 [&_th]:text-center [&_th]:font-normal [&_thead_th]:h-[20px] [&_td:nth-child(2)]:border-r-black [&_td:nth-child(2)]:border-r-2 [&_td:nth-child(4)]:pl-0 [&_td:nth-child(6)]:pr-[6px] [&_td_svg]:mx-auto [&_td_svg]:size-[10px] [&_p]:mx-auto [&_p]:w-[150px] [&_p]:border-b-2 [&_p]:border-black [&_p]:pl-[6px] [&_p]:text-center [&_p]:leading-[11px] [&_p]:text-[#d01818]">
                        <colgroup>
                            <col class="w-[33px]"><col class="w-[73px]"><col class="w-[56px]"><col class="w-[36px]"><col class="w-[33px]"><col class="w-[201px]"><col class="w-[166px]"><col class="w-[156px]"><col class="w-[61px]"><col class="w-[38px]"><col class="w-[39px]"><col>
                        </colgroup>
                        <thead class="bg-linear-to-b from-white to-[#f1eee4]">
                            <tr><th></th><th>筋号</th><th class="bg-linear-to-b from-[#ffd9a0] to-[#f8b45c] text-[#7c0030]">直径<em>(mm)</em></th><th>级别</th><th>图号</th><th>图形</th><th>计算公式</th><th>公式描述</th><th>长度<em>(mm)</em></th><th>根数</th><th>搭接</th><th>损耗<em>(%)</em></th></tr>
                        </thead>
                        <tbody>
                            <tr><th class="bg-[#ffcf87] text-[#7c0030]"><em>1*</em></th><td>横向底筋<em>.1</em></td><td class="bg-[#b2e8d8]"><em>12</em></td><td><svg><use href="#s-phi"/></svg></td><td><em>1</em></td><td><p><em>2420</em></p></td><td><em>2500-40-40</em></td><td>净长<em>-</em>保护层<em>-</em>保护层</td><td><em>2420</em></td><td><em>2</em></td><td><em>0</em></td><td><em>3</em></td></tr>
                            <tr><th class="bg-linear-to-b from-white to-[#f1eee4]"><em>2</em></th><td>横向底筋<em>.2</em></td><td><em>12</em></td><td><svg><use href="#s-phi"/></svg></td><td><em>1</em></td><td><p><em>2250</em></p></td><td><em>0.9*2500</em></td><td><em>0.9*</em>基础底长</td><td><em>2250</em></td><td><em>9</em></td><td><em>0</em></td><td><em>3</em></td></tr>
                            <tr><th class="bg-linear-to-b from-white to-[#f1eee4]"><em>3</em></th><td>横向面筋<em>.1</em></td><td><em>14</em></td><td><svg><use href="#s-phi"/></svg></td><td><em>1</em></td><td><p><em>2420</em></p></td><td><em>2500-40-40</em></td><td>净长<em>-</em>保护层<em>-</em>保护层</td><td><em>2420</em></td><td><em>2</em></td><td><em>0</em></td><td><em>3</em></td></tr>
                            <tr><th class="bg-linear-to-b from-white to-[#f1eee4]"><em>4</em></th><td>横向面筋<em>.2</em></td><td><em>14</em></td><td><svg><use href="#s-phi"/></svg></td><td><em>1</em></td><td><p><em>2250</em></p></td><td><em>0.9*2500</em></td><td><em>0.9*</em>基础底长</td><td><em>2250</em></td><td><em>9</em></td><td><em>0</em></td><td><em>3</em></td></tr>
                            <tr><th class="bg-linear-to-b from-white to-[#f1eee4]"><em>5</em></th><td>纵向底筋<em>.1</em></td><td><em>12</em></td><td><svg><use href="#s-phi"/></svg></td><td><em>1</em></td><td><p><em>1920</em></p></td><td><em>2000-40-40</em></td><td>净长<em>-</em>保护层<em>-</em>保护层</td><td><em>1920</em></td><td><em>2</em></td><td><em>0</em></td><td><em>3</em></td></tr>
                            <tr><th class="bg-linear-to-b from-white to-[#f1eee4]"></th><td></td><td></td><td></td><td></td><td></td><td></td><td></td><td></td><td></td><td></td><td></td></tr>
                        </tbody>
                    </table>
                </div>
            </section>
        </main>
    </div>

    <script>
        // corners of each rebar mat: top-left, top-right, bottom-left, bottom-right
        const mats = [
            [[180, 293], [627, 250], [290, 341], [738, 299]],
            [[187, 430], [634, 388], [296, 478], [745, 437]],
        ];
        const stagger = [0, 8, -4, 10, 4, -6];
        const at = (a, b, t) => [a[0] + (b[0] - a[0]) * t, a[1] + (b[1] - a[1]) * t];
        let d = '';

        function line(a, b, head, tail) {
            const len = Math.hypot(b[0] - a[0], b[1] - a[1]);
            const p = at(a, b, -head / len);
            const q = at(a, b, 1 + tail / len);
            d += `M${p[0].toFixed(1)} ${p[1].toFixed(1)}L${q[0].toFixed(1)} ${q[1].toFixed(1)}`;
        }

        for (const [tl, tr, bl, br] of mats) {
            for (let i = 0; i <= 8; i++) {
                line(at(tl, bl, i / 8), at(tr, br, i / 8), stagger[i % 6], stagger[(i + 2) % 6]);
                if (i < 8) {
                    line(at(tl, bl, (i + 0.45) / 8), at(tr, br, (i + 0.45) / 8), -40 - stagger[i % 6], -14);
                }
            }
            for (let i = 0; i <= 11; i++) {
                line(at(tl, tr, i / 11), at(bl, br, i / 11), stagger[i % 6] / 2, stagger[(i + 3) % 6] / 2);
            }
        }
        document.getElementById('mesh').innerHTML = `<path d="${d}"/>`;
    </script>
</body>
</html>
